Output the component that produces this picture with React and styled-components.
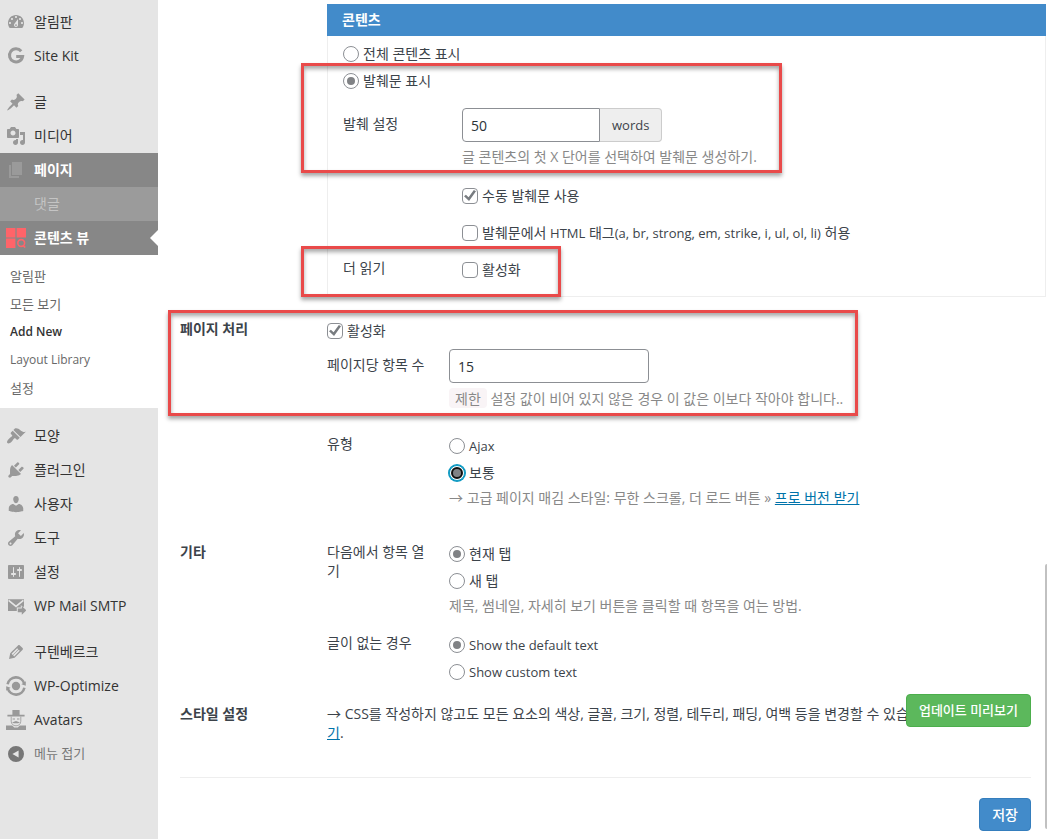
import React from 'react';
import styled, { createGlobalStyle, css } from 'styled-components';

const icons = {
	dashboard: (
		<path
			fillRule="evenodd"
			d="M3.76 16h12.48c1.1-1.37 1.76-3.11 1.76-5 0-4.42-3.58-8-8-8s-8 3.58-8 8c0 1.89.66 3.63 1.76 5zM10 4c.55 0 1 .45 1 1s-.45 1-1 1-1-.45-1-1 .45-1 1-1zM6 6c.55 0 1 .45 1 1s-.45 1-1 1-1-.45-1-1 .45-1 1-1zm8 0c.55 0 1 .45 1 1s-.45 1-1 1-1-.45-1-1 .45-1 1-1zm-5.37 5.55L12 7v6c0 1.1-.9 2-2 2s-2-.9-2-2c0-.57.24-1.08.63-1.45zM4 10c.55 0 1 .45 1 1s-.45 1-1 1-1-.45-1-1 .45-1 1-1zm12 0c.55 0 1 .45 1 1s-.45 1-1 1-1-.45-1-1 .45-1 1-1zM10 12.2a.9.9 0 1 0 0 1.8.9.9 0 0 0 0-1.8z"
		/>
	),
	siteKit: (
		<path
			fill="none"
			stroke="currentColor"
			strokeWidth="3"
			d="M15.2 5.2A6.6 6.6 0 1 0 16.6 10.4H10.2"
		/>
	),
	post: (
		<path d="M10.44 3.02l1.82-1.82 6.36 6.35-1.83 1.82c-1.05-.68-2.48-.57-3.41.36l-.75.75c-.92.93-1.04 2.35-.35 3.41l-1.83 1.82-2.41-2.41-2.8 2.79c-.42.42-3.38 2.71-3.8 2.29s1.86-3.39 2.28-3.81l2.79-2.79L4.1 9.36l1.83-1.82c1.05.69 2.48.57 3.4-.36l.75-.75c.93-.92 1.05-2.35.36-3.41z" />
	),
	media: (
		<path
			fillRule="evenodd"
			d="M13 11V4c0-.55-.45-1-1-1h-1.67L9 1H5L3.67 3H2c-.55 0-1 .45-1 1v7c0 .55.45 1 1 1h10c.55 0 1-.45 1-1zM7 4.5c1.38 0 2.5 1.12 2.5 2.5S8.38 9.5 7 9.5 4.5 8.38 4.5 7 5.62 4.5 7 4.5zM14 6h5v10.5c0 1.38-1.12 2.5-2.5 2.5S14 17.88 14 16.5s1.12-2.5 2.5-2.5c.17 0 .34.02.5.05V9h-3V6zm-4 8.05V13h2v3.5c0 1.38-1.12 2.5-2.5 2.5S7 17.88 7 16.5 8.12 14 9.5 14c.17 0 .34.02.5.05z"
		/>
	),
	page: <path d="M6 15V2h10v13H6zm-1 1h8v2H3V5h2v11z" />,
	views: (
		<g>
			<path d="M0 0h9.4v9.4H0zM10.6 0H20v9.4h-9.4zM0 10.6h9.4V20H0z" />
			<circle cx="15.2" cy="15" r="3.4" fill="none" stroke="currentColor" strokeWidth="1.6" />
			<path d="M17.4 16.6l2.4 2.4-1.2 1-2.4-2.2z" />
		</g>
	),
	appearance: (
		<path d="M14.48 11.06L7.41 3.99l1.5-1.5c.5-.56 2.3-.47 3.51.32 1.21.8 1.43 1.28 2.91 2.1 1.18.64 2.45 1.26 4.45.85zm-.71.71L6.7 4.7 4.93 6.47c-.39.39-.39 1.02 0 1.41l1.06 1.06c.39.39.39 1.03 0 1.42-.6.6-1.43 1.11-2.21 1.69-.35.26-.7.53-1.01.84C1.43 14.23.4 16.08 1.4 17.07c.99 1 2.84-.03 4.18-1.36.31-.31.58-.66.85-1.02.57-.78 1.08-1.61 1.69-2.21.39-.39 1.02-.39 1.41 0l1.06 1.06c.39.39 1.02.39 1.41 0z" />
	),
	plugins: (
		<path d="M13.11 4.36L9.87 7.6 8 5.73l3.24-3.24c.35-.34 1.05-.2 1.56.32.52.51.66 1.21.31 1.55zm-8 1.77l.91-1.12 9.01 9.01-1.19.84c-.71.71-2.63 1.16-3.82 1.16H6.14L4.9 17.26c-.59.59-1.54.59-2.12 0-.59-.58-.59-1.53 0-2.12l1.24-1.24v-3.88c0-1.13.4-3.19 1.09-3.89zm7.26 3.97l3.24-3.24c.34-.35 1.04-.21 1.55.31.52.51.66 1.21.31 1.55l-3.24 3.25z" />
	),
	users: (
		<path d="M10 9.25c-2.27 0-2.73-3.44-2.73-3.44C7 4.02 7.82 2 9.97 2c2.16 0 2.98 2.02 2.71 3.81 0 0-.41 3.44-2.68 3.44zm0 2.57L12.72 10c2.39 0 4.52 2.33 4.52 4.53v2.49s-3.65 1.13-7.24 1.13c-3.65 0-7.24-1.13-7.24-1.13v-2.49c0-2.25 1.94-4.48 4.47-4.48z" />
	),
	tools: (
		<path
			fillRule="evenodd"
			d="M16.68 9.77c-1.34 1.34-3.3 1.67-4.95.99l-5.41 6.52c-.99.99-2.59.99-3.58 0s-.99-2.59 0-3.57l6.52-5.42c-.68-1.65-.35-3.61.99-4.95 1.28-1.28 3.12-1.62 4.72-1.06l-2.89 2.89 2.82 2.82 2.86-2.87c.53 1.58.18 3.39-1.08 4.65zM3.81 16.21c.4.39 1.04.39 1.43 0 .4-.4.4-1.04 0-1.43-.39-.4-1.03-.4-1.43 0-.39.39-.39 1.03 0 1.43z"
		/>
	),
	settings: (
		<path
			fillRule="evenodd"
			d="M18 16V4c0-.55-.45-1-1-1H3c-.55 0-1 .45-1 1v12c0 .55.45 1 1 1h14c.55 0 1-.45 1-1zM8 11h1c.55 0 1 .45 1 1s-.45 1-1 1H8v1.5c0 .28-.22.5-.5.5s-.5-.22-.5-.5V13H6c-.55 0-1-.45-1-1s.45-1 1-1h1V5.5c0-.28.22-.5.5-.5s.5.22.5.5V11zm5-2h-1c-.55 0-1-.45-1-1s.45-1 1-1h1V5.5c0-.28.22-.5.5-.5s.5.22.5.5V7h1c.55 0 1 .45 1 1s-.45 1-1 1h-1v5.5c0 .28-.22.5-.5.5s-.5-.22-.5-.5V9z"
		/>
	),
	mail: (
		<g>
			<path d="M2 3.2h16v7.6h-1.4L14.8 9v2.6h-4V15H2z" />
			<path d="M2.6 4.4L10 10.4l7.4-6" fill="none" stroke="#e5e5e5" strokeWidth="1.6" />
			<path d="M11.8 12.6h4V10l4.6 4.4-4.6 4.4v-2.6h-4z" />
		</g>
	),
	pencil: (
		<path
			fillRule="evenodd"
			d="M13.89 3.39l2.71 2.72c.46.46.42 1.24.03 1.64l-8.01 8.02-5.56 1.16 1.16-5.58s7.6-7.63 7.99-8.03c.39-.39 1.22-.39 1.68.07zm-2.73 2.79l-5.59 5.61 1.11 1.11 5.54-5.65zm-2.97 8.23l5.58-5.6-1.07-1.08-5.59 5.6z"
		/>
	),
	optimize: (
		<g>
			<circle cx="10" cy="10" r="4.2" />
			<g fill="none" stroke="currentColor" strokeWidth="2.6">
				<path d="M1.6 8.2A8.6 8.6 0 0 1 18.2 7.4" />
				<path d="M18.4 11.8A8.6 8.6 0 0 1 1.8 12.6" />
			</g>
			<path d="M19.8 5.2v4.6l-4.4-1.6zM.2 14.8v-4.6l4.4 1.6z" />
		</g>
	),
	avatars: (
		<g>
			<path d="M6.4 0h7.2v4.8h5v1.8H1.4V4.8h5zM0 15.4h6.2l2 2h3.6l2-2H20V20H0z" />
			<path
				d="M5.2 6.6v4.6c0 2.8 2 4.6 4.8 4.6s4.8-1.8 4.8-4.6V6.6"
				fill="none"
				stroke="currentColor"
				strokeWidth=".8"
			/>
			<path d="M6.6 8.4h2.4v1H6.6zM11 8.4h2.4v1H11zM6 12.4l4-1.4 4 1.4-2 .8H8z" />
		</g>
	),
	collapse: (
		<path
			fillRule="evenodd"
			d="M10 2a8 8 0 1 1 0 16 8 8 0 0 1 0-16zm2.6 4.4L6.4 10l6.2 3.6z"
		/>
	)
};

const mainMenu = [
	[ { icon: 'dashboard', name: '알림판' }, { icon: 'siteKit', name: 'Site Kit' } ],
	[
		{ icon: 'post', name: '글' },
		{ icon: 'media', name: '미디어' },
		{ icon: 'page', name: '페이지', state: 'open' },
		{ name: '댓글', state: 'hover' },
		{ icon: 'views', name: '콘텐츠 뷰', state: 'current' }
	]
];

const lowerMenu = [
	[
		{ icon: 'appearance', name: '모양' },
		{ icon: 'plugins', name: '플러그인' },
		{ icon: 'users', name: '사용자' },
		{ icon: 'tools', name: '도구' },
		{ icon: 'settings', name: '설정' },
		{ icon: 'mail', name: 'WP Mail SMTP' }
	],
	[
		{ icon: 'pencil', name: '구텐베르크' },
		{ icon: 'optimize', name: 'WP-Optimize' },
		{ icon: 'avatars', name: 'Avatars' },
		{ icon: 'collapse', name: '메뉴 접기', state: 'collapse' }
	]
];

const subMenu = [
	{ name: '알림판' },
	{ name: '모든 보기' },
	{ name: 'Add New', latin: true, current: true },
	{ name: 'Layout Library', latin: true },
	{ name: '설정' }
];

function MenuGroup({ items }) {
	return (
		<MenuList>
			{items.map((item) => (
				<li key={item.name}>
					<MenuLink href="#" $state={item.state}>
						<MenuIcon viewBox="0 0 20 20" aria-hidden="true">
							{icons[item.icon]}
						</MenuIcon>
						<MenuText>{item.name}</MenuText>
					</MenuLink>
				</li>
			))}
		</MenuList>
	);
}

function Option({ type, name, focused, checked, children }) {
	return (
		<OptionLabel>
			{type === 'radio' ? (
				<Radio name={name} defaultChecked={checked} $focused={focused} />
			) : (
				<Checkbox name={name} defaultChecked={checked} />
			)}
			<span>{children}</span>
		</OptionLabel>
	);
}

export default function App() {
	return (
		<Page>
			<GlobalStyle />
			<Sidebar>
				{mainMenu.map((items, i) => <MenuGroup key={i} items={items} />)}
				<SubMenu>
					{subMenu.map((item) => (
						<li key={item.name}>
							<SubLink href="#" $current={item.current} $latin={item.latin}>
								{item.name}
							</SubLink>
						</li>
					))}
				</SubMenu>
				{lowerMenu.map((items, i) => <MenuGroup key={i} items={items} />)}
			</Sidebar>

			<Main>
				<Section>
					<span />
					<Panel>
						<PanelTitle>콘텐츠</PanelTitle>
						<PanelBody>
							<Option type="radio" name="content">전체 콘텐츠 표시</Option>
							<Option type="radio" name="content" checked>발췌문 표시</Option>
							<Field $inner $top={14}>
								<FieldLabel htmlFor="excerpt" $input>발췌 설정</FieldLabel>
								<div>
									<InputGroup>
										<TextInput id="excerpt" defaultValue="50" $joined />
										<Addon>words</Addon>
									</InputGroup>
									<Help>글 콘텐츠의 첫 X 단어를 선택하여 발췌문 생성하기.</Help>
								</div>
							</Field>
							<Field $inner $top={15}>
								<span />
								<Option name="manual" checked>수동 발췌문 사용</Option>
							</Field>
							<Field $inner $top={10}>
								<span />
								<Option name="html">
									발췌문에서 <Latin>HTML</Latin> 태그<Latin>(a, br, strong, em, strike, i, ul, ol, li)</Latin> 허용
								</Option>
							</Field>
							<Field $inner $top={10}>
								<FieldLabel as="span">더 읽기</FieldLabel>
								<Option name="readmore">활성화</Option>
							</Field>
						</PanelBody>
						<Highlight $left={-26} $top={59} $width={481} $height={110} />
						<Highlight $left={-26} $top={242} $width={260} $height={51} />
					</Panel>
				</Section>

				<Section $top={20}>
					<SectionTitle>페이지 처리</SectionTitle>
					<div>
						<Option name="paging" checked>활성화</Option>
						<Field $top={5}>
							<FieldLabel htmlFor="per-page" $input>페이지당 항목 수</FieldLabel>
							<div>
								<InputGroup>
									<TextInput id="per-page" defaultValue="15" />
								</InputGroup>
								<Help>
									<Code>제한</Code> 설정 값이 비어 있지 않은 경우 이 값은 이보다 작아야 합니다..
								</Help>
							</div>
						</Field>
						<Field $top={23}>
							<FieldLabel as="span" id="type-label">유형</FieldLabel>
							<div role="radiogroup" aria-labelledby="type-label">
								<Option type="radio" name="type"><Latin>Ajax</Latin></Option>
								<Option type="radio" name="type" checked focused>보통</Option>
								<Help>
									→ 고급 페이지 매김 스타일: 무한 스크롤, 더 로드 버튼 » <Link href="#">프로 버전 받기</Link>
								</Help>
							</div>
						</Field>
					</div>
					<Highlight $left={-12} $top={-7} $width={690} $height={106} />
				</Section>

				<Section $top={32}>
					<SectionTitle>기타</SectionTitle>
					<div>
						<Field>
							<FieldLabel as="span" id="open-label">다음에서 항목 열기</FieldLabel>
							<div role="radiogroup" aria-labelledby="open-label">
								<Option type="radio" name="open" checked>현재 탭</Option>
								<Option type="radio" name="open">새 탭</Option>
								<Help>제목, 썸네일, 자세히 보기 버튼을 클릭할 때 항목을 여는 방법.</Help>
							</div>
						</Field>
						<Field $top={15}>
							<FieldLabel as="span" id="empty-label">글이 없는 경우</FieldLabel>
							<div role="radiogroup" aria-labelledby="empty-label">
								<Option type="radio" name="empty" checked><Latin>Show the default text</Latin></Option>
								<Option type="radio" name="empty"><Latin>Show custom text</Latin></Option>
							</div>
						</Field>
					</div>
				</Section>

				<Section $top={17}>
					<SectionTitle>스타일 설정</SectionTitle>
					<StyleNote>
						→ CSS를 작성하지 않고도 모든 요소의 색상, 글꼴, 크기, 정렬, 테두리, 패딩, 여백 등을 변경할 수 있습니다.{' '}
						<Link href="#">프로 버전 받기</Link>.
					</StyleNote>
				</Section>

				<Footer>
					<Button>저장</Button>
				</Footer>
				<PreviewButton>업데이트 미리보기</PreviewButton>
			</Main>
			<ScrollThumb />
		</Page>
	);
}

const GlobalStyle = createGlobalStyle`
	*, *::before, *::after {
		box-sizing: border-box;
	}
	body {
		margin: 0;
		background: #fff;
		color: #3c434a;
		font-family: "Open Sans", "Noto Sans CJK KR", sans-serif;
		font-size: 14px;
		line-height: 19px;
	}
	ul {
		list-style: none;
		margin: 0;
		padding: 0;
	}
	input, button {
		font: inherit;
	}
`;

const Page = styled.div`
	position: relative;
	display: flex;
	min-height: 100vh;
`;

const Sidebar = styled.nav`
	flex: 0 0 158px;
	padding-top: 5px;
	background: #e5e5e5;
`;

const MenuList = styled.ul`
	& + & {
		margin-top: 12px;
	}
`;

const rowStates = {
	open: css`
		background: #878787;
		color: #fff;
		font-weight: 700;
		svg {
			color: #9a9a9a;
		}
	`,
	hover: css`
		background: #9b9b9b;
		color: #c4c4c4;
	`,
	current: css`
		background: #878787;
		color: #fff;
		font-weight: 700;
		svg {
			color: #ff6469;
		}
		&::after {
			content: "";
			position: absolute;
			right: 0;
			top: 9px;
			border: 8px solid transparent;
			border-left-width: 0;
			border-right-color: #fff;
		}
	`,
	collapse: css`
		color: #777;
		font-size: 13px;
		svg {
			color: #777;
		}
	`
};

const MenuLink = styled.a`
	position: relative;
	display: flex;
	align-items: center;
	gap: 8px;
	height: 34px;
	padding-left: 6px;
	color: #333;
	text-decoration: none;
	${(props) => rowStates[props.$state]}
`;

const MenuIcon = styled.svg`
	width: 20px;
	height: 20px;
	color: #999;
	fill: currentColor;
`;

const MenuText = styled.span`
	padding-bottom: 2px;
`;

const SubMenu = styled.ul`
	margin-bottom: 11px;
	padding: 7px 0 6px;
	background: #fff;
`;

const SubLink = styled.a`
	display: block;
	padding-left: 10px;
	font-size: ${(props) => (props.$latin ? 12 : 13)}px;
	line-height: 28px;
	color: ${(props) => (props.$current ? '#333' : '#686868')};
	font-weight: ${(props) => (props.$current ? 600 : 400)};
	text-decoration: none;
`;

const Main = styled.main`
	position: relative;
	flex: 1;
	min-width: 0;
	padding: 4px 1px 7px 22px;
`;

const Section = styled.section`
	position: relative;
	display: grid;
	grid-template-columns: 147px 1fr;
	margin-top: ${(props) => props.$top || 0}px;
`;

const SectionTitle = styled.h2`
	margin: 0;
	padding-top: 2px;
	font-size: 14px;
	line-height: 19px;
	font-weight: 700;
`;

const Panel = styled.div`
	position: relative;
`;

const PanelTitle = styled.h3`
	margin: 0;
	padding: 0 15px;
	background: #428bca;
	color: #fff;
	font-size: 14px;
	line-height: 32px;
	font-weight: 700;
`;

const PanelBody = styled.div`
	padding: 4px 15px 13px;
	border: 1px solid #eee;
	border-top: 0;
`;

const Field = styled.div`
	display: grid;
	grid-template-columns: ${(props) => (props.$inner ? 119 : 122)}px 1fr;
	margin-top: ${(props) => props.$top || 0}px;
`;

const FieldLabel = styled.label`
	padding: ${(props) => (props.$input ? 6 : 2)}px 20px 0 0;
`;

const OptionLabel = styled.label`
	display: flex;
	align-items: center;
	gap: 4px;
	height: 27px;
`;

const Latin = styled.span`
	font-size: 13px;
`;

const Radio = styled.input.attrs({ type: 'radio' })`
	appearance: none;
	flex: none;
	display: grid;
	place-items: center;
	width: 16px;
	height: 16px;
	margin: 0;
	border: 1px solid #8c8f94;
	border-radius: 50%;
	background: #fff;
	&:checked::before {
		content: "";
		width: 8px;
		height: 8px;
		border-radius: 50%;
		background: #808285;
	}
	${(props) =>
		props.$focused &&
		css`
			border-color: #0d99c2;
			box-shadow: 0 0 0 1px #0d99c2;
			&:checked::before {
				width: 12px;
				height: 12px;
				border: 2px solid #111;
			}
		`}
`;

const Checkbox = styled.input.attrs({ type: 'checkbox' })`
	appearance: none;
	flex: none;
	display: grid;
	place-items: center;
	width: 16px;
	height: 16px;
	margin: 0;
	border: 1px solid #8c8f94;
	border-radius: 4px;
	background: #fff;
	&:checked::before {
		content: "";
		width: 12px;
		height: 12px;
		background: #787c80;
		clip-path: polygon(0 56%, 16% 44%, 38% 64%, 82% 4%, 100% 14%, 42% 96%);
	}
`;

const InputGroup = styled.div`
	display: flex;
	margin-bottom: 5px;
`;

const TextInput = styled.input.attrs({ type: 'text' })`
	width: ${(props) => (props.$joined ? 138 : 200)}px;
	height: 34px;
	padding: 0 8px;
	border: 1px solid #8c8f94;
	border-radius: ${(props) => (props.$joined ? '4px 0 0 4px' : '4px')};
	background: #fff;
	color: #2c3338;
`;

const Addon = styled.span`
	padding: 0 12px;
	border: 1px solid #ccc;
	border-left: 0;
	border-radius: 0 4px 4px 0;
	background: #eee;
	font-size: 13px;
	line-height: 32px;
`;

const Help = styled.p`
	margin: 2px 0 0;
	line-height: 20px;
	color: #888;
`;

const Code = styled.code`
	display: inline-block;
	padding: 0 6px;
	border-radius: 4px;
	background: #f9f4f6;
	font-family: "Noto Sans CJK KR", monospace;
	font-size: 14px;
`;

const Link = styled.a`
	color: #0073aa;
`;

const StyleNote = styled.p`
	margin: 0;
	padding: 2px 30px 0 0;
`;

const Footer = styled.footer`
	display: flex;
	justify-content: flex-end;
	margin: 35px 15px 0 0;
	padding-top: 20px;
	border-top: 1px solid #eee;
`;

const Button = styled.button`
	height: 33px;
	padding: 0 12px;
	border: 1px solid #357ebd;
	border-radius: 4px;
	background: #428bca;
	color: #fff;
	font-weight: 500;
`;

const PreviewButton = styled(Button)`
	position: absolute;
	right: 16px;
	bottom: 112px;
	border-color: #4cae4c;
	background: #5cb85c;
	font-size: 13px;
`;

const Highlight = styled.div`
	position: absolute;
	left: ${(props) => props.$left}px;
	top: ${(props) => props.$top}px;
	width: ${(props) => props.$width}px;
	height: ${(props) => props.$height}px;
	border: 3px solid #e94a4a;
	box-shadow: 0 3px 4px rgba(0, 0, 0, .35), inset 0 3px 4px rgba(0, 0, 0, .35);
	pointer-events: none;
`;

const ScrollThumb = styled.div`
	position: absolute;
	right: 0;
	bottom: 10px;
	width: 2px;
	height: 265px;
	border-radius: 2px 0 0 2px;
	background: #c1c1c1;
`;
